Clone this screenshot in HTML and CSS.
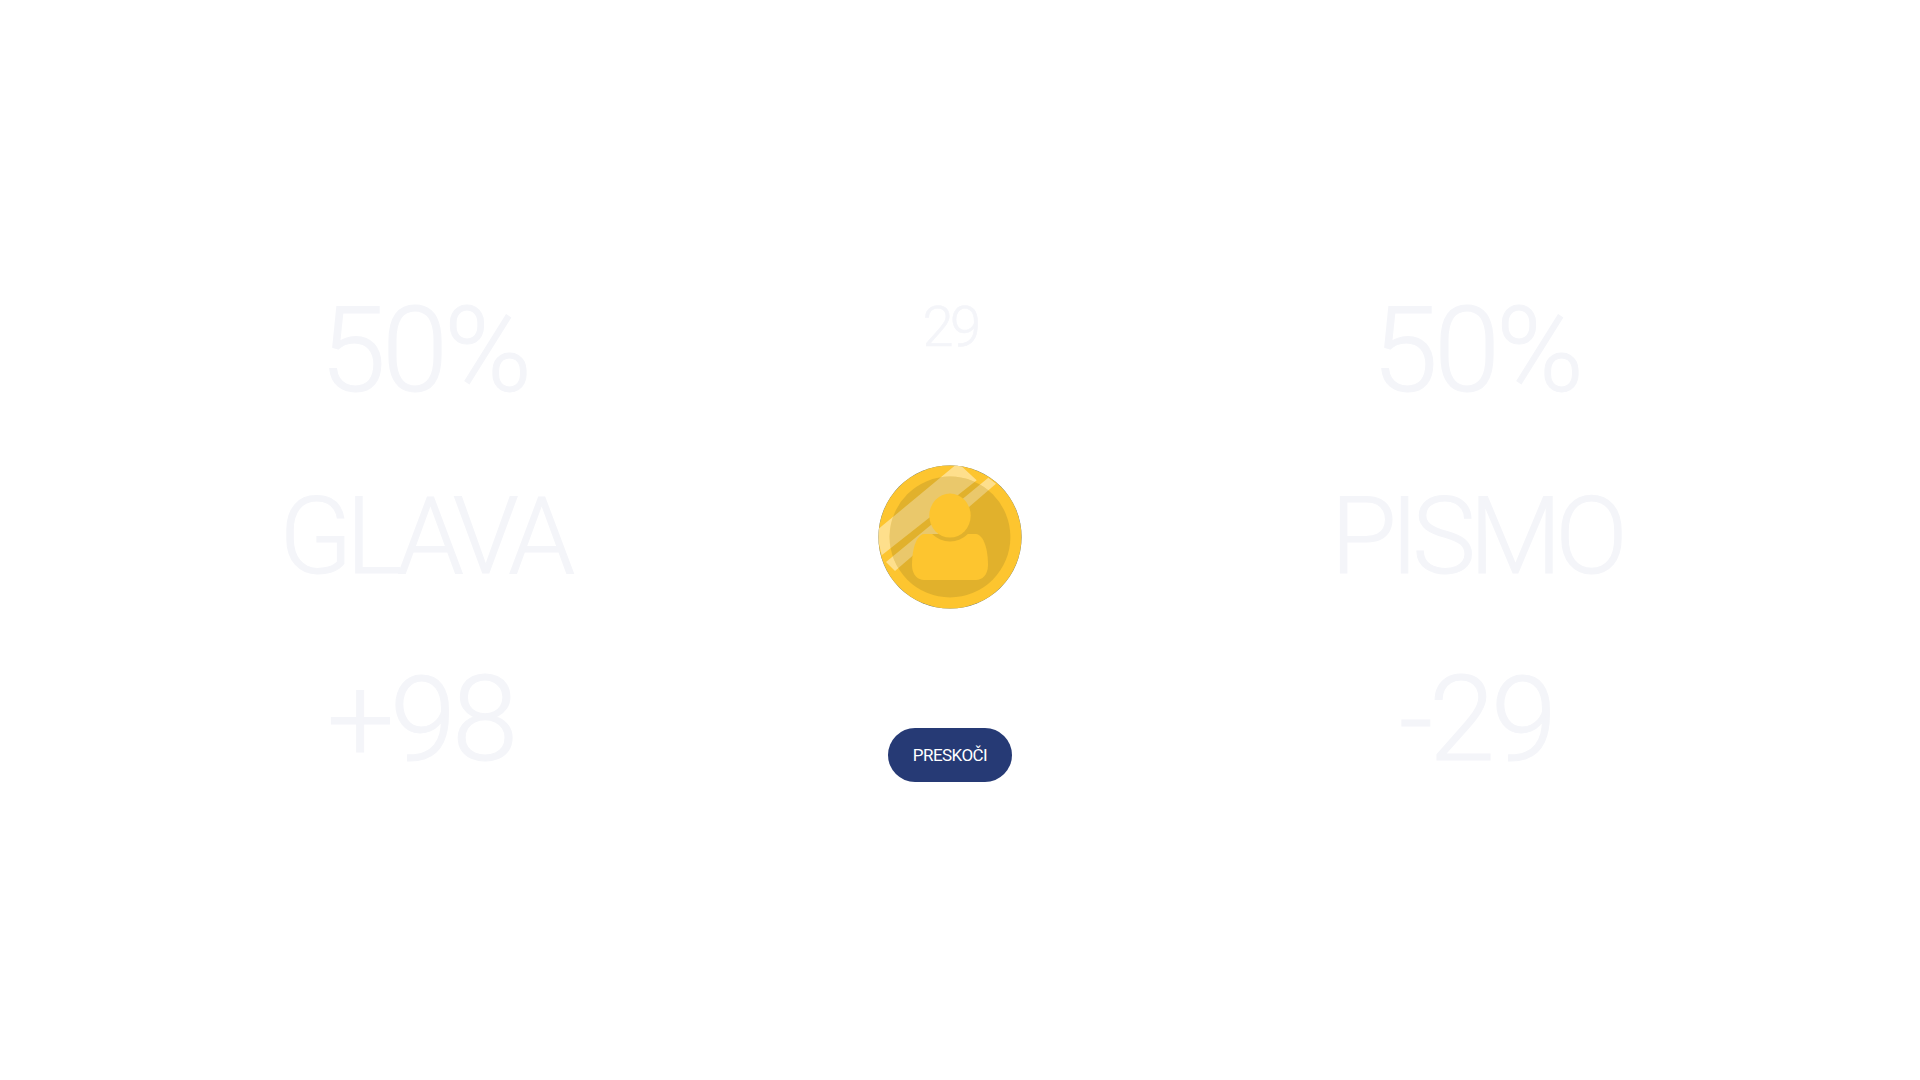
FILE: index.html
```html
<!DOCTYPE html>
<html lang="hr">
<head>
  <meta charset="UTF-8" />
  <title>Glava ili pismo</title>
  <link rel="stylesheet" href="styles.css">
</head>
<body>
  <main class="game">
    <section class="side">
      <div class="percent">50%</div>
      <div class="name">GLAVA</div>
      <div class="score plus">+98</div>
    </section>

    <section class="middle">
      <div class="timer">29</div>
      <svg class="coin" viewBox="0 0 144 144" width="144" height="144" aria-hidden="true">
        <defs>
          <clipPath id="coinClip"><circle cx="72" cy="72" r="71.5" /></clipPath>
          <clipPath id="innerClip"><circle cx="72" cy="72" r="60.4" /></clipPath>
          <clipPath id="bodyClip">
            <path d="M46 69 L98 69 C106 70 110 85 110 100 C110 110 104 115 98 115 L46 115 C40 115 34 110 34 100 C34 85 38 70 46 69 Z" />
          </clipPath>
          <g id="bands">
            <polygon points="80,-2 98.7,15.3 3.7,90.3 -2,66" />
            <polygon points="110.3,12.7 118,18.7 17,106 8,97" />
          </g>
        </defs>
        <circle cx="72" cy="72" r="71.6" fill="#5d7480" />
        <circle cx="72" cy="72" r="71.5" fill="#fdc52f" />
        <g clip-path="url(#coinClip)" fill="#fff" fill-opacity="0.45">
          <use href="#bands" />
        </g>
        <circle cx="72" cy="72" r="60.4" fill="#e1b12c" />
        <g clip-path="url(#innerClip)" fill="#fff" fill-opacity="0.3">
          <use href="#bands" />
        </g>
        <path d="M46 69 L98 69 C106 70 110 85 110 100 C110 110 104 115 98 115 L46 115 C40 115 34 110 34 100 C34 85 38 70 46 69 Z" fill="#fdc52f" />
        <ellipse cx="72" cy="50.6" rx="25.5" ry="25.8" fill="#e1b12c" clip-path="url(#bodyClip)" />
        <ellipse cx="72" cy="50.6" rx="20.7" ry="22" fill="#fdc52f" />
      </svg>
      <button class="skip">PRESKOČI</button>
    </section>

    <section class="side">
      <div class="percent">50%</div>
      <div class="name">PISMO</div>
      <div class="score">-29</div>
    </section>
  </main>
</body>
</html>
```

FILE: styles.css
```css
* { box-sizing: border-box; }
html, body {
  height: 100%;
}
body {
  margin: 0;
  background: #fff;
  font-family: Roboto, sans-serif;
  color: #f4f5f9;
}
.game {
  width: 1900px;
  height: 1080px;
  padding: 281px 161px 0;
  display: grid;
  grid-template-columns: repeat(3, 1fr);
}
.side {
  display: flex;
  flex-direction: column;
  align-items: center;
  font-weight: 300;
  -webkit-text-stroke: 1px #f4f5f9;
}
.percent,
.score {
  font-size: 119px;
  line-height: 140px;
  letter-spacing: -4px;
}
.name {
  font-size: 107px;
  line-height: 140px;
  letter-spacing: -6.5px;
  margin-top: 46px;
}
.score {
  margin-top: 43px;
}
.plus {
  margin-right: 7px;
}
.middle {
  display: flex;
  flex-direction: column;
  align-items: center;
  margin-top: -1px;
}
.timer {
  font-size: 56px;
  font-weight: 300;
  line-height: 66px;
  letter-spacing: -3.5px;
  margin-top: 14px;
  -webkit-text-stroke: 0.6px #f4f5f9;
}
.coin {
  display: block;
  margin-top: 105px;
}
.skip {
  margin-top: 119px;
  width: 124px;
  height: 54px;
  border: 0;
  border-radius: 27px;
  background: #263a75;
  color: #fff;
  font-family: Roboto, sans-serif;
  font-size: 17px;
  letter-spacing: -0.55px;
}
```
